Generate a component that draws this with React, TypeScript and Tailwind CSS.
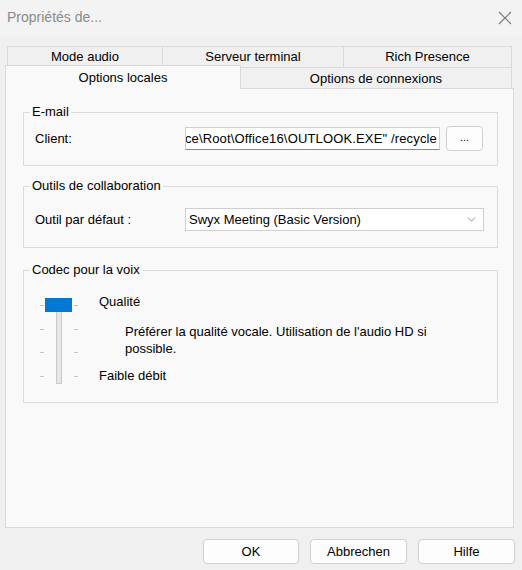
import { ChevronDown } from 'lucide-react'

const font = { fontFamily: '"Liberation Sans", Arial, sans-serif' }

function Slider() {
  return (
    <svg width="41" height="94" viewBox="0 0 41 94" className="shrink-0">
      {[11, 35, 58, 82].map((y) => (
        <g key={y} stroke="#c4c4c4" strokeWidth="1">
          <line x1="1" y1={y + 0.5} x2="5" y2={y + 0.5} />
          <line x1="35" y1={y + 0.5} x2="39" y2={y + 0.5} />
        </g>
      ))}
      <rect x="17.5" y="17.5" width="5" height="72" fill="#e6e6e6" stroke="#c9c9c9" />
      <rect x="6" y="4" width="27" height="14" fill="#0078d4" />
    </svg>
  )
}

export default function App() {
  return (
    <div className="w-[522px] h-[570px] bg-[#f0f0f0] text-[13px] text-black flex flex-col" style={font}>
      <div className="h-[36px] bg-[#f3f3f3] flex items-center justify-between pl-[7px] pr-[10px]">
        <span className="text-[14px] text-[#8a8a8a] -mt-px">Propriétés de...</span>
        <svg width="14" height="14" viewBox="0 0 14 14" className="-mt-px">
          <path d="M1 1L13 13M13 1L1 13" stroke="#7a7a7a" strokeWidth="1.1" />
        </svg>
      </div>

      <div className="mt-[10px] ml-[7px] w-[505px] h-[21px] flex border-t border-r border-[#d9d9d9]">
        <div className="w-[155px] border-l border-[#d9d9d9] flex items-center justify-center">Mode audio</div>
        <div className="w-[181px] border-l border-[#d9d9d9] flex items-center justify-center">Serveur terminal</div>
        <div className="flex-1 border-l border-[#d9d9d9] flex items-center justify-center">Rich Presence</div>
      </div>
      <div className="ml-[5px] h-[21px] flex">
        <div className="relative z-10 w-[236px] h-[24px] -mt-[2px] bg-[#f9f9f9] border-t border-l border-r border-[#d9d9d9] flex justify-center pt-[2px]">
          Options locales
        </div>
        <div className="w-[271px] border-t border-r border-[#d9d9d9] flex items-center justify-center pt-[2px]">
          Options de connexions
        </div>
      </div>

      <div className="ml-[5px] w-[509px] h-[440px] border border-[#dadada] bg-[#f9f9f9] flex flex-col pl-[17px] pt-[15px]">
        <fieldset className="w-[475px] border border-[#dcdcdc] pl-[11px] pr-[14px] pt-[6px] pb-[14px]">
          <legend className="-ml-[5px] px-[2px] leading-[16px]">E-mail</legend>
          <div className="flex items-center">
            <span className="w-[150px]">Client:</span>
            <div className="w-[255px] h-[23px] bg-white border border-[#d0d0d0] border-b-[#8a8a8a] overflow-hidden flex justify-end items-center pr-[2px] whitespace-nowrap tracking-[0.15px]">
              "C:\Program Files\Microsoft Office\Root\Office16\OUTLOOK.EXE" /recycle
            </div>
            <button className="ml-[6px] w-[37px] h-[25px] rounded-[4px] border border-[#d0d0d0] bg-[#fdfdfd] text-[11px] leading-none pb-[2px]">
              ...
            </button>
          </div>
        </fieldset>

        <fieldset className="mt-[12px] w-[475px] border border-[#dcdcdc] pl-[11px] pr-[13px] pt-[14px] pb-[16px]">
          <legend className="-ml-[5px] px-[2px] leading-[16px]">Outils de collaboration</legend>
          <div className="flex items-center">
            <span className="w-[150px]">Outil par défaut :</span>
            <div className="w-[299px] h-[23px] bg-white border border-[#cfcfcf] flex items-center justify-between pl-[3px] pr-[5px]">
              <span>Swyx Meeting (Basic Version)</span>
              <ChevronDown size={13} strokeWidth={1.2} color="#555" />
            </div>
          </div>
        </fieldset>

        <fieldset className="mt-[14px] w-[475px] border border-[#dcdcdc] pl-[15px] pt-[16px] pb-[14px]">
          <legend className="-ml-[9px] px-[2px] leading-[16px]">Codec pour la voix</legend>
          <div className="flex">
            <Slider />
            <div className="ml-[19px] -mt-px flex flex-col leading-[17px]">
              <span>Qualité</span>
              <p className="ml-[26px] mt-[13px] w-[330px]">
                Préférer la qualité vocale. Utilisation de l'audio HD si possible.
              </p>
              <span className="mt-[10px]">Faible débit</span>
            </div>
          </div>
        </fieldset>
      </div>

      <div className="mt-[11px] flex justify-end gap-[11px] pr-[7px]">
        <button className="w-[96px] h-[25px] rounded-[4px] border border-[#d0d0d0] bg-[#fdfdfd]">OK</button>
        <button className="w-[97px] h-[25px] rounded-[4px] border border-[#d0d0d0] bg-[#fdfdfd]">Abbrechen</button>
        <button className="w-[97px] h-[25px] rounded-[4px] border border-[#d0d0d0] bg-[#fdfdfd]">Hilfe</button>
      </div>
    </div>
  )
}
